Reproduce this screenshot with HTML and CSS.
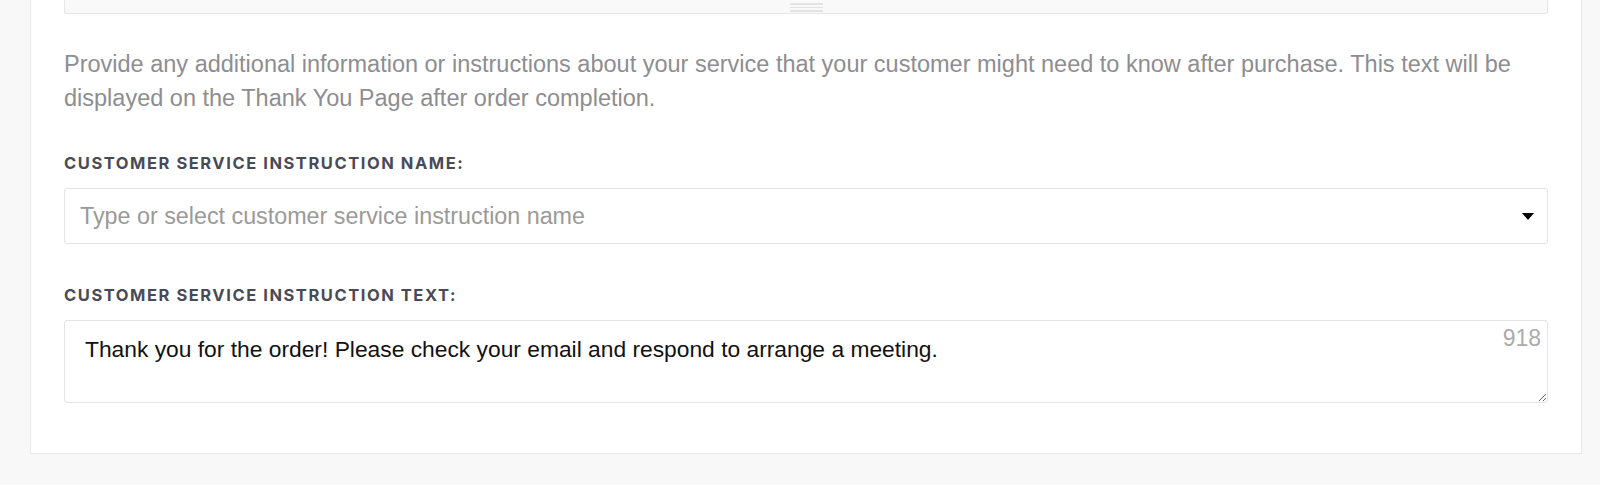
FILE: index.html
```html
<!DOCTYPE html>
<html lang="en">
<head>
<meta charset="utf-8">
<title>Customer service instruction</title>
<link rel="stylesheet" href="styles.css">
</head>
<body>
<div class="card">
  <div class="editor-tail">
    <span class="grip"><i></i><i></i><i></i></span>
  </div>
  <p class="help">Provide any additional information or instructions about your service that your customer might need to know after purchase. This text will be displayed on the Thank You Page after order completion.</p>

  <div class="field">
    <label class="label">Customer service instruction name:</label>
    <div class="select">
      <span class="placeholder">Type or select customer service instruction name</span>
      <svg class="caret" width="12" height="7" viewBox="0 0 12 7"><path d="M0 0H12L6 7Z" fill="#000"/></svg>
    </div>
  </div>

  <div class="field field-text">
    <label class="label">Customer service instruction text:</label>
    <div class="textarea-wrap">
      <textarea class="textarea">Thank you for the order! Please check your email and respond to arrange a meeting.</textarea>
      <span class="counter">918</span>
    </div>
  </div>
</div>
</body>
</html>
```

FILE: styles.css
```css
html, body {
  margin: 0;
  padding: 0;
  background: #f8f8f8;
  height: 485px;
  overflow: hidden;
}

.card {
  margin-left: 30px;
  width: 1552px;
  box-sizing: border-box;
  background: #fff;
  border: 1px solid #e9e9e9;
  border-top: none;
  padding: 0 33px 50px;
}

.editor-tail {
  height: 13px;
  background: #f9f9f9;
  border: 1px solid #e6e6e6;
  border-top: none;
  border-radius: 0 0 3px 3px;
  display: flex;
  justify-content: center;
  align-items: flex-start;
}

.grip {
  display: flex;
  flex-direction: column;
  gap: 2px;
  padding-top: 3px;
  width: 33px;
}

.grip i {
  display: block;
  height: 1.5px;
  background: #e3e3e3;
}

.help {
  margin: 33px 0 0;
  font-family: "Liberation Sans", Arial, sans-serif;
  font-size: 23.5px;
  line-height: 34px;
  color: #8d8d92;
}

.field {
  margin-top: 38px;
}

.field-text {
  margin-top: 41px;
}

.label {
  display: block;
  font-family: Inter, "Noto Sans", sans-serif;
  font-weight: 700;
  font-size: 16.5px;
  line-height: 20px;
  letter-spacing: 1.55px;
  text-transform: uppercase;
  color: #4a4a57;
  margin-bottom: 15px;
}

.select {
  height: 56px;
  box-sizing: border-box;
  border: 1px solid #e4e4e4;
  border-radius: 3px;
  background: #fff;
  display: flex;
  align-items: center;
  justify-content: space-between;
  padding: 0 13px 0 15px;
}

.placeholder {
  font-family: "Liberation Sans", Arial, sans-serif;
  font-size: 23.3px;
  color: #9a9a9a;
}

.caret {
  display: block;
}

.textarea-wrap {
  position: relative;
}

.textarea {
  display: block;
  width: 100%;
  height: 83px;
  box-sizing: border-box;
  margin: 0;
  border: 1px solid #e4e4e4;
  border-radius: 3px;
  padding: 15px 60px 10px 20px;
  font-family: "Liberation Sans", Arial, sans-serif;
  font-size: 22.8px;
  line-height: 26px;
  color: #111;
  resize: vertical;
  outline: none;
  overflow: hidden;
}

.counter {
  position: absolute;
  top: 5px;
  right: 7px;
  font-family: "Liberation Sans", Arial, sans-serif;
  font-size: 23px;
  color: #ababab;
}
```
